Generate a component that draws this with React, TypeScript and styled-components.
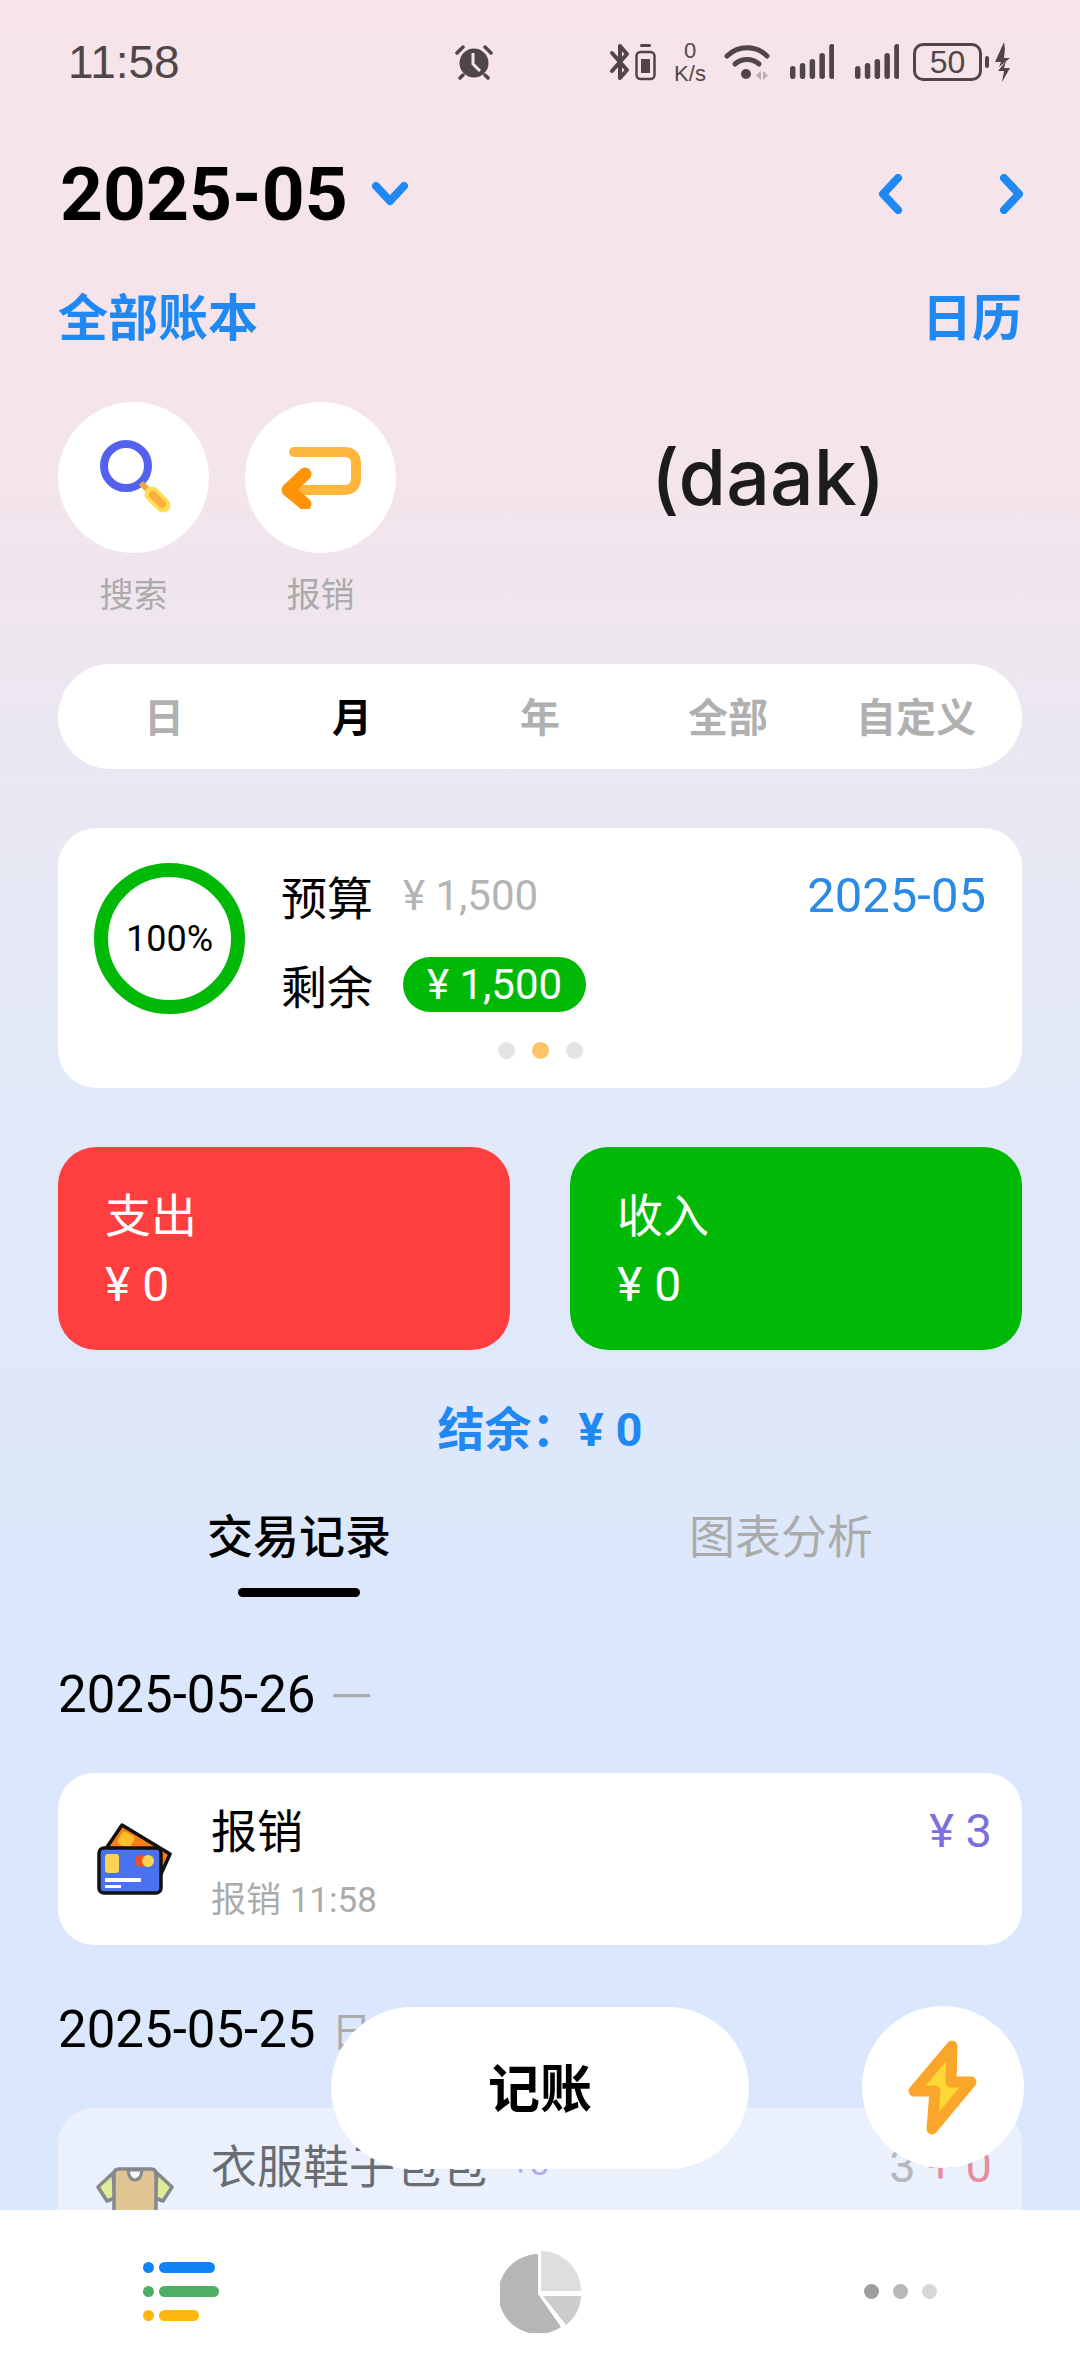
import styled, { createGlobalStyle } from "styled-components";

const GlobalStyle = createGlobalStyle`
  html, body {
    margin: 0;
    padding: 0;
    background: #dbe7fc;
  }
  * {
    box-sizing: border-box;
  }
`

const BLUE = "#1f88f2";
const GREEN = "#00b907";
const SANS = `Roboto, "Noto Sans CJK SC", sans-serif`;

const Screen = styled.div`
  position: relative;
  width: 1080px;
  height: 2373px;
  display: flex;
  flex-direction: column;
  overflow: hidden;
  font-family: ${SANS};
  color: #000;
  background: linear-gradient(180deg, #f6e4ea 0, #f4e4eb 480px, #e8e8f3 800px, #e2e9f8 1100px, #dbe7fc 1700px);
`

const Scroll = styled.div`
  flex: 1;
  min-height: 0;
  overflow: hidden;
  padding: 0 58px;
`

const StatusBar = styled.div`
  height: 124px;
  margin: 0 -58px;
  padding: 0 68px;
  display: flex;
  align-items: center;
  color: #504648;
`

const Time = styled.div`
  width: 388px;
  font-family: "Liberation Sans", sans-serif;
  font-size: 46px;
`

const AlarmSlot = styled.div`
  width: 155px;
  display: flex;
`

const StatusIcons = styled.div`
  display: flex;
  align-items: center;
`

const Speed = styled.div`
  width: 36px;
  margin: 0 16px;
  font-family: "Liberation Sans", sans-serif;
  font-size: 22px;
  line-height: 23px;
  text-align: center;
`

const Battery = styled.div`
  width: 69px;
  height: 38px;
  margin-left: 14px;
  border: 3px solid #504648;
  border-radius: 10px;
  display: flex;
  align-items: center;
  justify-content: center;
  font-family: "Liberation Sans", sans-serif;
  font-size: 32px;
`

const BatteryCap = styled.div`
  width: 4px;
  height: 12px;
  margin: 0 4px 0 3px;
  border-radius: 2px;
  background: #504648;
`

const HeaderRow = styled.div`
  height: 140px;
  display: flex;
  align-items: center;
  justify-content: space-between;
`

const MonthPicker = styled.div`
  display: flex;
  align-items: center;
  gap: 23px;
`

const Month = styled.div`
  font-size: 75px;
  font-weight: 700;
  padding-left: 2px;
`

const Arrows = styled.div`
  display: flex;
  align-items: center;
  gap: 96px;
  margin-right: -3px;
`

const LinkRow = styled.div`
  height: 104px;
  padding-bottom: 5px;
  display: flex;
  align-items: center;
  justify-content: space-between;
  color: ${BLUE};
  font-size: 50px;
  font-weight: 700;
`

const QuickRow = styled.div`
  margin-top: 34px;
  display: flex;
  align-items: flex-start;
  gap: 36px;
`

const QuickAction = styled.div`
  width: 151px;
  display: flex;
  flex-direction: column;
  align-items: center;
`

const QuickCircle = styled.div`
  width: 151px;
  height: 151px;
  border-radius: 50%;
  background: #fff;
  display: flex;
  align-items: center;
  justify-content: center;
`

const QuickLabel = styled.div`
  height: 56px;
  margin-top: 14px;
  font-size: 34px;
  line-height: 56px;
  color: #ababab;
`

const BookName = styled.div`
  flex: 1;
  height: 151px;
  padding-left: 82px;
  text-align: center;
  font-family: Inter, sans-serif;
  font-size: 77px;
  font-weight: 500;
  line-height: 151px;
  color: #1c1c1e;
`

const RangeTabs = styled.div`
  height: 105px;
  margin-top: 41px;
  padding: 0 12px 3px;
  border-radius: 53px;
  background: #fff;
  display: grid;
  grid-template-columns: repeat(5, 1fr);
  align-items: center;
  text-align: center;
`

const RangeTab = styled.div<{ $active?: boolean }>`
  font-size: 40px;
  font-weight: 700;
  color: ${p => (p.$active ? "#000" : "#b0b0b0")};
`

const BudgetCard = styled.div`
  height: 260px;
  margin-top: 59px;
  padding: 35px 36px 0;
  border-radius: 38px;
  background: #fff;
`

const BudgetMain = styled.div`
  display: flex;
  gap: 36px;
`

const Ring = styled.div`
  width: 151px;
  height: 151px;
  border: 14px solid ${GREEN};
  border-radius: 50%;
  display: flex;
  align-items: center;
  justify-content: center;
  font-size: 36px;
`

const BudgetRows = styled.div`
  flex: 1;
  display: flex;
  flex-direction: column;
  gap: 25px;
`

const BudgetRow = styled.div`
  height: 64px;
  display: flex;
  align-items: center;
  gap: 30px;
  font-size: 46px;
`

const BudgetAmount = styled.span`
  font-size: 42px;
  color: #b4b4b4;
`

const BudgetPill = styled.span`
  height: 55px;
  padding: 0 24px;
  border-radius: 28px;
  background: ${GREEN};
  color: #fff;
  font-size: 42px;
  line-height: 55px;
`

const BudgetDate = styled.div`
  height: 64px;
  font-size: 49px;
  line-height: 66px;
  color: #2b8ae6;
`

const PageDots = styled.div`
  margin-top: 26px;
  display: flex;
  justify-content: center;
  gap: 17px;
`

const PageDot = styled.div<{ $active?: boolean }>`
  width: 17px;
  height: 17px;
  border-radius: 50%;
  background: ${p => (p.$active ? "#fcc56a" : "#e4e4e4")};
`

const StatRow = styled.div`
  margin-top: 59px;
  display: flex;
  gap: 60px;
`

const StatCard = styled.div<{ $color: string }>`
  flex: 1;
  height: 203px;
  padding: 39px 47px 0;
  border-radius: 38px;
  background: ${p => p.$color};
  color: #fff;
  font-size: 46px;
  line-height: 60px;
`

const StatValue = styled.div`
  margin-top: 9px;
  font-size: 48px;
`

const Balance = styled.div`
  height: 156px;
  padding-bottom: 6px;
  display: flex;
  align-items: center;
  justify-content: center;
  color: ${BLUE};
  font-size: 47px;
  font-weight: 700;
`

const ViewTabs = styled.div`
  display: flex;
  height: 77px;
  margin-top: -2px;
`

const ViewTab = styled.div<{ $active?: boolean }>`
  flex: 1;
  position: relative;
  text-align: center;
  font-size: 46px;
  line-height: 66px;
  font-weight: ${p => (p.$active ? 500 : 400)};
  color: ${p => (p.$active ? "#000" : "#ababab")};

  ${p => p.$active && `
    &::after {
      content: "";
      position: absolute;
      left: 50%;
      bottom: -16px;
      width: 122px;
      height: 9px;
      margin-left: -61px;
      border-radius: 5px;
      background: #000;
    }
  `}
`

const DateRow = styled.div<{ $top: number }>`
  height: 58px;
  margin-top: ${p => p.$top}px;
  display: flex;
  align-items: center;
  gap: 16px;
  font-size: 51px;
`

const Weekday = styled.span`
  font-size: 40px;
  color: #ababab;
`

const RecordCard = styled.div<{ $faded?: boolean }>`
  height: 172px;
  margin-top: 50px;
  padding-left: 38px;
  padding-right: 30px;
  border-radius: 36px;
  background: ${p => (p.$faded ? "rgba(255, 255, 255, 0.42)" : "#fff")};
  display: flex;

  ${p => p.$faded && `
    > * {
      opacity: 0.55;
    }
  `}
`

const RecordIcon = styled.div`
  width: 78px;
  margin-right: 37px;
  display: flex;
  align-items: center;
  justify-content: center;
`

const RecordBody = styled.div`
  flex: 1;
  padding-top: 25px;
`

const RecordTitle = styled.div`
  display: flex;
  align-items: center;
  gap: 24px;
  height: 60px;
  font-size: 46px;
  color: #000;
`

const RecordCount = styled.span`
  font-size: 34px;
  color: #7b6fe0;
`

const RecordSub = styled.div`
  height: 50px;
  margin-top: 18px;
  font-size: 35px;
  line-height: 50px;
  color: #ababab;
`

const RecordAmount = styled.div`
  height: 60px;
  margin-top: 28px;
  font-size: 47px;
  line-height: 60px;
  color: #7b6fe0;
`

const AmountPart = styled.span<{ $color: string }>`
  color: ${p => p.$color};
`

const AddButton = styled.div`
  position: absolute;
  left: 331px;
  bottom: 204px;
  width: 418px;
  height: 162px;
  padding-bottom: 5px;
  border-radius: 81px;
  background: #fff;
  display: flex;
  align-items: center;
  justify-content: center;
  font-size: 52px;
  font-weight: 700;
`

const QuickAdd = styled.div`
  position: absolute;
  right: 56px;
  bottom: 205px;
  width: 162px;
  height: 162px;
  border-radius: 50%;
  background: #fff;
  display: flex;
  align-items: center;
  justify-content: center;
`

const BottomNav = styled.div`
  position: relative;
  height: 163px;
  flex-shrink: 0;
  padding-left: 2px;
  background: #fff;
  display: grid;
  grid-template-columns: repeat(3, 1fr);
  align-items: center;
`

const NavCell = styled.div`
  display: flex;
  justify-content: center;
`

const ListLines = styled.div`
  width: 78px;
  display: flex;
  flex-direction: column;
  gap: 13px;
`

const ListLine = styled.div`
  display: flex;
  gap: 5px;
`

const ListDot = styled.div<{ $color: string }>`
  width: 11px;
  height: 11px;
  border-radius: 50%;
  background: ${p => p.$color};
`

const ListBar = styled.div<{ $color: string; $width: number }>`
  width: ${p => p.$width}px;
  height: 11px;
  border-radius: 6px;
  background: ${p => p.$color};
`

const MoreDots = styled.div`
  display: flex;
  gap: 14px;
`

const MoreDot = styled.div<{ $color: string }>`
  width: 15px;
  height: 15px;
  border-radius: 50%;
  background: ${p => p.$color};
`

const AlarmIcon = () => (
  <svg width="38" height="36" viewBox="0 0 38 36">
    <circle cx="19" cy="19" r="14.5" fill="#504648"/>
    <path d="M18 9v11l7 7" fill="none" stroke="#f6e4ea" strokeWidth="3"/>
    <path d="M2 9l6-6M36 9l-6-6M8 31l-3 3M30 31l3 3" stroke="#504648" strokeWidth="3.5" strokeLinecap="round"/>
  </svg>
)

const VibrateIcon = () => (
  <svg width="47" height="38" viewBox="0 0 47 38">
    <path d="M3 10l15 17-7 8V3l7 8L3 28" fill="none" stroke="#504648" strokeWidth="4" strokeLinejoin="round" strokeLinecap="round"/>
    <rect x="31" y="1" width="11" height="3" rx="1.5" fill="#504648"/>
    <rect x="27.5" y="9" width="18" height="27" rx="4" fill="none" stroke="#504648" strokeWidth="2.5"/>
    <rect x="32" y="16" width="9" height="14" fill="#504648"/>
  </svg>
)

const WifiIcon = () => (
  <svg width="46" height="38" viewBox="0 0 46 38">
    <path d="M3 13c11-11 29-11 40 0" fill="none" stroke="#504648" strokeWidth="5" strokeLinecap="round"/>
    <path d="M11 21c7-6 17-6 24 0" fill="none" stroke="#504648" strokeWidth="5" strokeLinecap="round"/>
    <circle cx="22" cy="31" r="5" fill="#504648"/>
    <path d="M37 28v9l-5-4.500zM39 28v9l5-4.500z" fill="#b9adb0"/>
  </svg>
)

const SignalIcon = ({ left }: { left: number }) => (
  <svg width="44" height="36" viewBox="0 0 44 36" style={{ marginLeft: left }}>
    {[13, 16, 20, 26, 35].map((h, i) => (
      <rect key={i} x={i * 9.8} y={35 - h} width="5.500" height={h} rx="2.700" fill="#504648"/>
    ))}
  </svg>
)

const ChargeIcon = () => (
  <svg width="19" height="40" viewBox="0 0 19 40">
    <path d="M11 0L2 20h6l-2 5 11-9h-6l1-9zM13 19l-2 7h6l-8 14 2-11H5z" fill="#504648"/>
  </svg>
)

const Chevron = ({ d, w, h }: { d: string; w: number; h: number }) => (
  <svg width={w} height={h} viewBox={`0 0 ${w} ${h}`}>
    <path d={d} fill="none" stroke={BLUE} strokeWidth="8" strokeLinecap="round" strokeLinejoin="round"/>
  </svg>
)

const SearchIcon = () => (
  <svg width="80" height="80" viewBox="-6 -2 80 80">
    <circle cx="26" cy="26" r="22" fill="none" stroke="#5461ee" strokeWidth="8"/>
    <path d="M41 43l6 6" stroke="#f2a93b" strokeWidth="6"/>
    <path d="M52 54l11 11" stroke="#ffdd55" strokeWidth="15" strokeLinecap="round"/>
    <path d="M53 55l9 9" stroke="#fbb03c" strokeWidth="8" strokeLinecap="round"/>
  </svg>
)

const ReturnIcon = () => (
  <svg width="80" height="62" viewBox="0 0 80 62">
    <path d="M13 5h50q12 0 12 12v14q0 12-12 12H12" fill="none" stroke="#ffb63d" strokeWidth="10" strokeLinecap="round"/>
    <path d="M24 27L7 43l17 14" fill="none" stroke="#ff9408" strokeWidth="13" strokeLinecap="round" strokeLinejoin="round"/>
  </svg>
)

const BoltIcon = () => (
  <svg width="70" height="95" viewBox="0 0 70 95">
    <path d="M44 6L6 51h21l-3 38 39-47H43z" fill="#fdd835" stroke="#faa62b" strokeWidth="11" strokeLinejoin="round"/>
  </svg>
)

const CardsIcon = () => (
  <svg width="76" height="72" viewBox="0 0 76 72">
    <path d="M25 2L73 31 60 60 6 30z" fill="#f57f17" stroke="#111" strokeWidth="3.500" strokeLinejoin="round"/>
    <rect x="22" y="10" width="14" height="14" rx="3" transform="rotate(30 29 17)" fill="#fbc02d"/>
    <rect x="2" y="25" width="62" height="45" rx="5" fill="#4a72ee" stroke="#111" strokeWidth="3.500"/>
    <rect x="8" y="31" width="14" height="19" rx="3" fill="#fdd257"/>
    <circle cx="44" cy="38" r="6" fill="#f4511e"/>
    <circle cx="51" cy="38" r="6" fill="#fdd257"/>
    <rect x="8" y="55" width="36" height="4" fill="#fff"/>
    <rect x="8" y="62" width="16" height="3" fill="#fff"/>
  </svg>
)

const ShirtIcon = () => (
  <svg width="78" height="70" viewBox="0 0 78 70" style={{ marginTop: 16 }}>
    <path d="M17 6L2 20l9 14 8-3zM61 6l15 14-9 14-8-3z" fill="#d6e84a" stroke="#333" strokeWidth="3.500" strokeLinejoin="round"/>
    <path d="M18 68V7q0-5 5-5h32q5 0 5 5v61z" fill="#d9a040" stroke="#333" strokeWidth="3.500"/>
    <path d="M32 3h14q-1 10-7 10t-7-10z" fill="#fff" stroke="#333" strokeWidth="3"/>
  </svg>
)

const PieIcon = () => (
  <svg width="82" height="82" viewBox="0 0 82 82">
    <path d="M38 3A40 40 0 1 0 61 76L38 43z" fill="#b6b6b6"/>
    <path d="M41 0A40 40 0 0 1 81 40H41z" fill="#dedede"/>
    <path d="M43 45H81A40 40 0 0 1 66 74z" fill="#cdcdcd"/>
  </svg>
)

const App = () => (
  <Screen>
    <GlobalStyle/>
    <Scroll>
      <StatusBar>
        <Time>11:58</Time>
        <AlarmSlot><AlarmIcon/></AlarmSlot>
        <StatusIcons>
          <VibrateIcon/>
          <Speed>0<br/>K/s</Speed>
          <WifiIcon/>
          <SignalIcon left={20}/>
          <SignalIcon left={21}/>
          <Battery>50</Battery>
          <BatteryCap/>
          <ChargeIcon/>
        </StatusIcons>
      </StatusBar>

      <HeaderRow>
        <MonthPicker>
          <Month>2025-05</Month>
          <Chevron w={38} h={26} d="M5 5l14 15L33 5"/>
        </MonthPicker>
        <Arrows>
          <Chevron w={26} h={40} d="M21 4L6 20l15 16"/>
          <Chevron w={26} h={40} d="M5 4l15 16L5 36"/>
        </Arrows>
      </HeaderRow>

      <LinkRow>
        <span>全部账本</span>
        <span>日历</span>
      </LinkRow>

      <QuickRow>
        <QuickAction>
          <QuickCircle><SearchIcon/></QuickCircle>
          <QuickLabel>搜索</QuickLabel>
        </QuickAction>
        <QuickAction>
          <QuickCircle><ReturnIcon/></QuickCircle>
          <QuickLabel>报销</QuickLabel>
        </QuickAction>
        <BookName>(daak)</BookName>
      </QuickRow>

      <RangeTabs>
        <RangeTab>日</RangeTab>
        <RangeTab $active>月</RangeTab>
        <RangeTab>年</RangeTab>
        <RangeTab>全部</RangeTab>
        <RangeTab>自定义</RangeTab>
      </RangeTabs>

      <BudgetCard>
        <BudgetMain>
          <Ring>100%</Ring>
          <BudgetRows>
            <BudgetRow>预算 <BudgetAmount>¥ 1,500</BudgetAmount></BudgetRow>
            <BudgetRow>剩余 <BudgetPill>¥ 1,500</BudgetPill></BudgetRow>
          </BudgetRows>
          <BudgetDate>2025-05</BudgetDate>
        </BudgetMain>
        <PageDots>
          <PageDot/>
          <PageDot $active/>
          <PageDot/>
        </PageDots>
      </BudgetCard>

      <StatRow>
        <StatCard $color="#ff3f3f">
          支出
          <StatValue>¥ 0</StatValue>
        </StatCard>
        <StatCard $color={GREEN}>
          收入
          <StatValue>¥ 0</StatValue>
        </StatCard>
      </StatRow>

      <Balance>结余：¥ 0</Balance>

      <ViewTabs>
        <ViewTab $active>交易记录</ViewTab>
        <ViewTab>图表分析</ViewTab>
      </ViewTabs>

      <DateRow $top={84}>2025-05-26 <Weekday>一</Weekday></DateRow>
      <RecordCard>
        <RecordIcon><CardsIcon/></RecordIcon>
        <RecordBody>
          <RecordTitle>报销</RecordTitle>
          <RecordSub>报销 11:58</RecordSub>
        </RecordBody>
        <RecordAmount>¥ 3</RecordAmount>
      </RecordCard>

      <DateRow $top={55}>2025-05-25 <Weekday>日</Weekday></DateRow>
      <RecordCard $faded>
        <RecordIcon><ShirtIcon/></RecordIcon>
        <RecordBody>
          <RecordTitle>衣服鞋子包包 <RecordCount>+3</RecordCount></RecordTitle>
        </RecordBody>
        <RecordAmount>
          <AmountPart $color="#888">3</AmountPart> <AmountPart $color="#e0384f">+ 0</AmountPart>
        </RecordAmount>
      </RecordCard>
    </Scroll>

    <AddButton>记账</AddButton>
    <QuickAdd><BoltIcon/></QuickAdd>

    <BottomNav>
      <NavCell>
        <ListLines>
          <ListLine><ListDot $color="#0f85f5"/><ListBar $color="#0f85f5" $width={56}/></ListLine>
          <ListLine><ListDot $color="#4caf63"/><ListBar $color="#4caf63" $width={60}/></ListLine>
          <ListLine><ListDot $color="#ffb50d"/><ListBar $color="#ffb50d" $width={40}/></ListLine>
        </ListLines>
      </NavCell>
      <NavCell><PieIcon/></NavCell>
      <NavCell>
        <MoreDots>
          <MoreDot $color="#9e9e9e"/>
          <MoreDot $color="#b8b8b8"/>
          <MoreDot $color="#d8d8d8"/>
        </MoreDots>
      </NavCell>
    </BottomNav>
  </Screen>
)

export default App
